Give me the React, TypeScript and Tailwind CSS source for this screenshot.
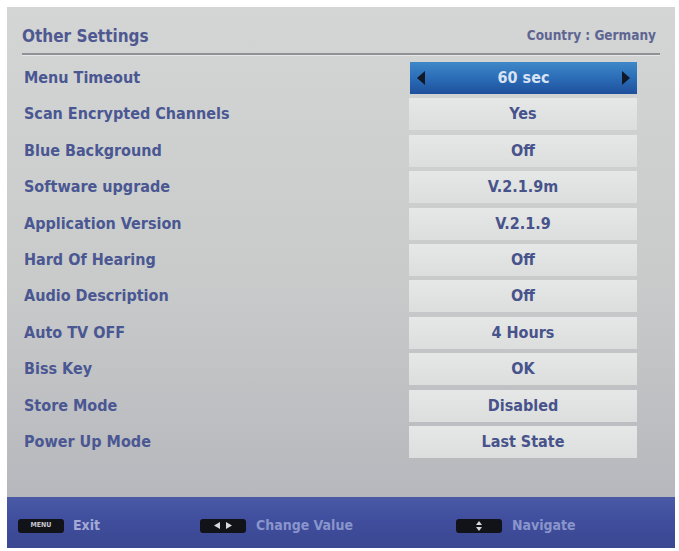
const rows: [string, string][] = [
  ["Menu Timeout", "60 sec"],
  ["Scan Encrypted Channels", "Yes"],
  ["Blue Background", "Off"],
  ["Software upgrade", "V.2.1.9m"],
  ["Application Version", "V.2.1.9"],
  ["Hard Of Hearing", "Off"],
  ["Audio Description", "Off"],
  ["Auto TV OFF", "4 Hours"],
  ["Biss Key", "OK"],
  ["Store Mode", "Disabled"],
  ["Power Up Mode", "Last State"],
];

const font = { fontFamily: '"DejaVu Sans Condensed", "DejaVu Sans", sans-serif' };

function Key({ children }: { children: React.ReactNode }) {
  return (
    <div className="flex h-[14px] w-[46px] items-center justify-center gap-[6px] rounded-[3px] bg-[#121318] text-[7px] font-bold text-[#c8c8d0]">
      {children}
    </div>
  );
}

export default function App() {
  return (
    <div className="h-[551px] w-[679px] bg-white pl-[7px] pt-[7px]" style={font}>
      <div className="flex h-[541px] w-[668px] flex-col bg-gradient-to-b from-[#d3d6d5] via-[#c9cbcb] to-[#b2b3b9]">
        <div className="flex items-end justify-between px-[15px] pt-[18px] pb-[6px]">
          <span className="text-[17px] font-bold leading-[22px] text-[#4f5890]">Other Settings</span>
          <span className="pb-[4px] pr-[4px] text-[13.5px] font-bold leading-[16px] text-[#5f6592]">Country : Germany</span>
        </div>
        <div className="mx-[15px] h-[2px] bg-[#8e9196] shadow-[0_1px_0_#e6e8e8]" />
        <div className="mt-[7px] flex flex-col gap-[4.4px] pl-[17px] pr-[38px]">
          {rows.map(([label, value], i) => (
            <div key={label} className="flex h-[32px] items-center justify-between">
              <span className="text-[16px] font-bold text-[#4a5792]">{label}</span>
              {i === 0 ? (
                <div className="flex h-[32px] w-[227px] items-center justify-between bg-gradient-to-b from-[#3f88c8] via-[#2b6db7] to-[#1f4f9c] px-[6px]">
                  <svg width="10" height="14" viewBox="0 0 10 14"><path d="M9 0 L1 7 L9 14 Z" fill="#111827" /></svg>
                  <span className="text-[16px] font-bold text-[#d9e3f3]">{value}</span>
                  <svg width="10" height="14" viewBox="0 0 10 14"><path d="M1 0 L9 7 L1 14 Z" fill="#111827" /></svg>
                </div>
              ) : (
                <div className="flex h-[32px] w-[228px] items-center justify-center bg-gradient-to-b from-[#e6e8e8] to-[#dcdede] text-[16px] font-bold text-[#47538a]">
                  {value}
                </div>
              )}
            </div>
          ))}
        </div>
        <div className="mt-auto flex h-[51px] items-center bg-gradient-to-b from-[#4a5aa6] via-[#3f4d9c] to-[#3a4791] pl-[11px] pt-[6px] text-[14px] font-bold text-[#8a95cc]">
          <div className="flex w-[182px] items-center gap-[9px]">
            <Key>MENU</Key>
            <span className="text-[#a3aad6]">Exit</span>
          </div>
          <div className="flex w-[256px] items-center gap-[10px]">
            <Key>
              <svg width="6" height="7" viewBox="0 0 6 7"><path d="M6 0 L0 3.5 L6 7 Z" fill="#d8d8e0" /></svg>
              <svg width="6" height="7" viewBox="0 0 6 7"><path d="M0 0 L6 3.5 L0 7 Z" fill="#d8d8e0" /></svg>
            </Key>
            <span>Change Value</span>
          </div>
          <div className="flex items-center gap-[10px]">
            <Key>
              <svg width="6" height="10" viewBox="0 0 6 10"><path d="M3 0 L6 4 L0 4 Z M3 10 L6 6 L0 6 Z" fill="#d8d8e0" /></svg>
            </Key>
            <span>Navigate</span>
          </div>
        </div>
      </div>
    </div>
  );
}
